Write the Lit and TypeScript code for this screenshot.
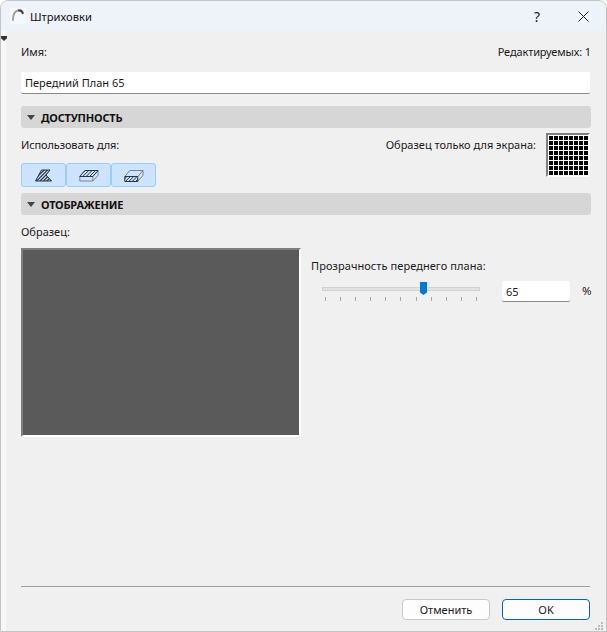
import { LitElement, html, css, svg } from "lit";
import { customElement } from "lit/decorators.js";

const ticks = Array.from({ length: 11 });
const cells = Array.from({ length: 64 });

const hatch = (x: number, y: number, w: number, h: number, step = 3) => {
  const lines = [];
  for (let i = -h; i < w; i += step) {
    lines.push(svg`<line x1=${x + i} y1=${y + h} x2=${x + i + h} y2=${y} />`);
  }
  return lines;
};

@customElement("app-root")
export class AppRoot extends LitElement {
  static styles = css`
    :host {
      display: block;
      width: 607px;
      height: 632px;
      font-family: "Noto Sans", "Open Sans", sans-serif;
      font-size: 11px;
      color: #1a1a1a;
      background: #fff;
    }
    .win {
      box-sizing: border-box;
      width: 607px;
      height: 632px;
      border: 1px solid #c4c4c4;
      border-radius: 8px 8px 0 0;
      background: #f0f0f0;
      display: flex;
      flex-direction: column;
      overflow: hidden;
      position: relative;
    }
    .title {
      height: 30px;
      flex: none;
      background: #eef3f9;
      display: flex;
      align-items: center;
      padding-left: 9px;
      font-size: 11.2px;
    }
    .icon { margin-right: 4px; }
    .title .name { flex: 1; color: #111; }
    .tbtn {
      width: 46px;
      display: flex;
      justify-content: center;
      font-size: 14px;
    }
    .strip {
      position: absolute;
      left: 0;
      top: 30px;
      bottom: 0;
      width: 5px;
      background: #f7f7f7;
    }
    .caret {
      position: absolute;
      left: 0;
      top: 35px;
      width: 6px;
      height: 5px;
      background: #333;
      clip-path: polygon(0 0, 100% 0, 100% 45%, 50% 100%, 0 45%);
    }
    .body {
      flex: 1;
      padding: 13px 16px 0 20px;
      display: flex;
      flex-direction: column;
    }
    .row {
      display: flex;
      justify-content: space-between;
      align-items: center;
    }
    .row .ed { letter-spacing: -0.12px; margin-right: -1px; }
    .input {
      box-sizing: border-box;
      height: 22px;
      background: #fff;
      border-bottom: 1px solid #8a8a8a;
      border-radius: 2px;
      padding: 0 4px;
      display: flex;
      align-items: center;
    }
    .name-in { margin-top: 13px; }
    .sec {
      height: 22px;
      background: #d6d6d6;
      border-radius: 3px;
      display: flex;
      align-items: center;
      font-weight: 700;
      gap: 6px;
      padding-left: 6px;
      color: #111;
      letter-spacing: -0.2px;
      margin-right: -1px;
    }
    .sec i {
      width: 0;
      height: 0;
      border: 4px solid transparent;
      border-top: 5px solid #444;
      border-bottom: 0;
    }
    .s1 { margin-top: 12px; }
    .avail { display: flex; justify-content: space-between; margin-top: 5px; }
    .left { padding-top: 4px; }
    .left .use { letter-spacing: -0.12px; }
    .btns { display: flex; margin-top: 11px; }
    .btn {
      width: 45px;
      height: 24px;
      box-sizing: border-box;
      background: #cce4ff;
      border: 1px solid #99ccff;
      border-radius: 3px;
      display: flex;
      align-items: center;
      justify-content: center;
    }
    .screen { display: flex; gap: 10px; align-items: flex-start; }
    .screen span { margin-top: 4px; }
    .swatch {
      box-sizing: border-box;
      width: 44px;
      height: 44px;
      background: #fff;
      border-top: 2px solid #7f7f7f;
      border-left: 2px solid #7f7f7f;
      border-right: 2px solid #fff;
      border-bottom: 2px solid #fff;
      padding: 1px 0 0 1px;
      display: grid;
      grid-template-columns: repeat(8, 4px);
      grid-auto-rows: 4px;
      gap: 1px;
    }
    .swatch b { background: #000; }
    .s2 { margin-top: 6px; }
    .display { display: flex; gap: 10px; margin-top: 9px; }
    .preview-col { width: 280px; flex: none; }
    .preview {
      box-sizing: border-box;
      margin-top: 9px;
      height: 189px;
      background: #5a5a5a;
      border-top: 2px solid #7f7f7f;
      border-left: 2px solid #7f7f7f;
      border-right: 2px solid #fff;
      border-bottom: 2px solid #fff;
    }
    .trans { flex: 1; padding-top: 34px; }
    .trans .lbl { letter-spacing: 0.07px; }
    .slide-row { display: flex; align-items: flex-start; margin-top: 7px; }
    .slider { width: 158px; margin: 7px 0 0 11px; position: relative; height: 20px; }
    .track {
      box-sizing: border-box;
      height: 4px;
      background: #e2e4e4;
      border: 1px solid #d0d2d2;
    }
    .thumb {
      position: absolute;
      left: 98px;
      top: -5px;
      width: 7px;
      height: 13px;
      background: #0078d4;
      clip-path: polygon(0 0, 100% 0, 100% 80%, 50% 100%, 0 80%);
    }
    .ticks {
      display: flex;
      justify-content: space-between;
      margin-top: 6px;
      padding: 0 3px;
    }
    .ticks s { width: 1px; height: 4px; background: #a8a8a8; }
    .pct { width: 68px; margin: 1px 0 0 22px; height: 21px; }
    .pc { margin-left: 12px; margin-top: 3px; font-size: 11.5px; }
    .spacer { flex: 1; }
    .foot {
      border-top: 1px solid #a0a0a0;
      height: 45px;
      flex: none;
      display: flex;
      justify-content: flex-end;
      align-items: flex-start;
      gap: 12px;
      padding-top: 12px;
      box-sizing: border-box;
    }
    .pb {
      box-sizing: border-box;
      height: 21px;
      width: 88px;
      background: #fdfdfd;
      border-radius: 4px;
      display: flex;
      align-items: center;
      justify-content: center;
      border: 1px solid #c8c8c8;
    }
    .pb.ok { border-color: #0067c0; }
    .grip {
      position: absolute;
      right: 3px;
      bottom: 1px;
    }
  `;

  render() {
    return html`<div class="win">
      <div class="title">
        <svg class="icon" width="16" height="16" viewBox="0 0 16 16" fill="none">
          <rect width="16" height="16" fill="#f6f8fb" />
          <path d="M2.8 12.8 C3 7 5 3 8 2.5" stroke="#a0a0a0" stroke-width="2" />
          <path d="M8 2.5 C10.5 2 12.5 3.5 13 6" stroke="#484848" stroke-width="2" />
        </svg>
        <span class="name">Штриховки</span>
        <span class="tbtn">?</span>
        <span class="tbtn">
          <svg width="11" height="11" viewBox="0 0 11 11"><path d="M.5 .5L10.5 10.5M10.5 .5L.5 10.5" stroke="#222" fill="none" /></svg>
        </span>
      </div>
      <div class="strip"></div>
      <div class="caret"></div>
      <div class="body">
        <div class="row"><span>Имя:</span><span class="ed">Редактируемых: 1</span></div>
        <div class="input name-in">Передний План 65</div>
        <div class="sec s1"><i></i>ДОСТУПНОСТЬ</div>
        <div class="avail">
          <div class="left">
            <div class="use">Использовать для:</div>
            <div class="btns">
              <div class="btn">
                <svg width="18" height="14" viewBox="0 0 18 14" fill="none" stroke="#2a3440">
                  <clipPath id="c1"><path d="M.5 13 L6.5 2 H15 L11 7 L16.5 13 Z" /></clipPath>
                  <g clip-path="url(#c1)" stroke-width="1.2">${hatch(0, 1, 18, 13, 3.4)}</g>
                  <path d="M.5 13 L6.5 2 H15 L11 7 L16.5 13 Z" stroke-linejoin="round" />
                </svg>
              </div>
              <div class="btn">
                <svg width="20" height="14" viewBox="0 0 20 14" fill="none" stroke="#2a3440">
                  <path d="M.8 8.5 H13.8 V13 H.8 Z M13.8 13 L19 7.5 V2.5" stroke="#808080" />
                  <clipPath id="c2"><path d="M.8 8.5 L5.8 2.5 H19 L13.8 8.5 Z" /></clipPath>
                  <g clip-path="url(#c2)">${hatch(0, 2, 20, 7, 3.4)}</g>
                  <path d="M.8 8.5 L5.8 2.5 H19 L13.8 8.5 Z" />
                </svg>
              </div>
              <div class="btn">
                <svg width="20" height="14" viewBox="0 0 20 14" fill="none" stroke="#2a3440">
                  <path d="M.8 8.5 L5.8 2.5 H19 V7.5 L13.8 13 M13.8 8.5 L19 2.5" stroke="#808080" />
                  <clipPath id="c3"><rect x=".8" y="8.5" width="13" height="5" /></clipPath>
                  <g clip-path="url(#c3)">${hatch(0, 8, 16, 6, 3.4)}</g>
                  <path d="M.8 8.5 H13.8 V13.5 H.8 Z" />
                </svg>
              </div>
            </div>
          </div>
          <div class="screen">
            <span>Образец только для экрана:</span>
            <div class="swatch">${cells.map(() => html`<b></b>`)}</div>
          </div>
        </div>
        <div class="sec s2"><i></i>ОТОБРАЖЕНИЕ</div>
        <div class="display">
          <div class="preview-col">
            <div>Образец:</div>
            <div class="preview"></div>
          </div>
          <div class="trans">
            <div class="lbl">Прозрачность переднего плана:</div>
            <div class="slide-row">
              <div class="slider">
                <div class="track"></div>
                <div class="thumb"></div>
                <div class="ticks">${ticks.map(() => html`<s></s>`)}</div>
              </div>
              <div class="input pct">65</div>
              <span class="pc">%</span>
            </div>
          </div>
        </div>
        <div class="spacer"></div>
        <div class="foot">
          <div class="pb">Отменить</div>
          <div class="pb ok">OK</div>
        </div>
      </div>
      <svg class="grip" width="8" height="8" viewBox="0 0 8 8" fill="#bbb">
        <rect x="6" y="0" width="2" height="2" /><rect x="3" y="3" width="2" height="2" />
        <rect x="6" y="3" width="2" height="2" /><rect x="0" y="6" width="2" height="2" />
        <rect x="3" y="6" width="2" height="2" /><rect x="6" y="6" width="2" height="2" />
      </svg>
    </div>`;
  }
}
